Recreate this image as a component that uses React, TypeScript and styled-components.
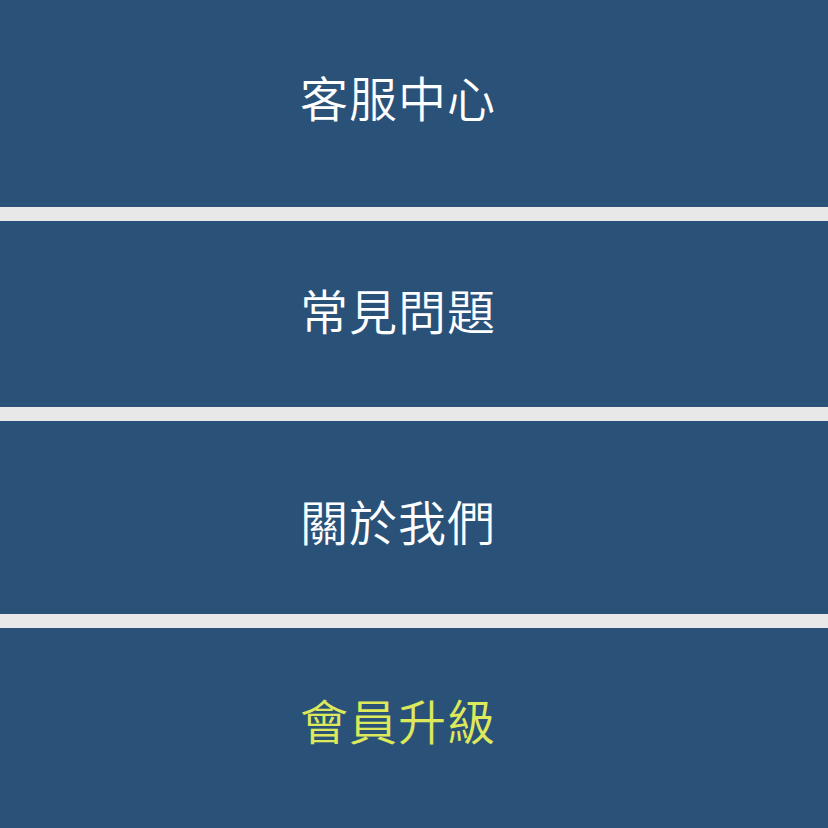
import React from "react";
import styled, { createGlobalStyle } from "styled-components";

const Global = createGlobalStyle`
  html, body { margin: 0; padding: 0; background: #e8e8e8; }
  body { font-family: "Noto Sans CJK TC", "Noto Sans", sans-serif; }
`;

const Menu = styled.nav`
  display: flex;
  flex-direction: column;
  gap: 14px;
  width: 828px;
  height: 828px;
  overflow: hidden;
  background: #e8e8e8;
`;

const Item = styled.a<{ $h: number; $top: number; $accent?: boolean }>`
  display: flex;
  justify-content: center;
  align-items: flex-start;
  flex: 0 0 auto;
  box-sizing: border-box;
  height: ${(p) => p.$h}px;
  padding: ${(p) => p.$top}px 32px 0 0;
  background: #2a5279;
  color: ${(p) => (p.$accent ? "#dde85a" : "#ffffff")};
  font-size: 48px;
  line-height: 48px;
  font-weight: 350;
  letter-spacing: 1px;
  text-decoration: none;
`;

const items = [
  { label: "客服中心", h: 207, top: 72 },
  { label: "常見問題", h: 186, top: 64 },
  { label: "關於我們", h: 193, top: 75 },
  { label: "會員升級", h: 200, top: 67, accent: true },
];

export default function App() {
  return (
    <>
      <Global />
      <Menu>
        {items.map((it) => (
          <Item key={it.label} href="#" $h={it.h} $top={it.top} $accent={it.accent}>
            {it.label}
          </Item>
        ))}
      </Menu>
    </>
  );
}
